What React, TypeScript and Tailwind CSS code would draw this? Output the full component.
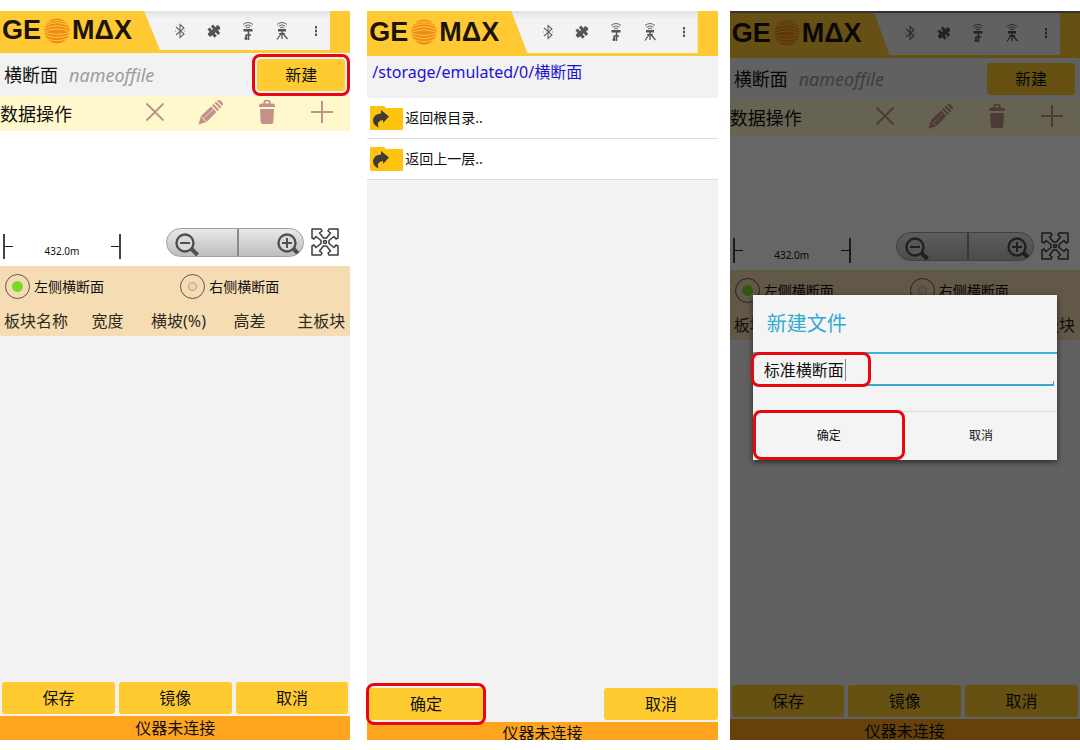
import React, { useId } from 'react';

const FRAME = 'pointer-events-none absolute rounded-lg border-[3px] border-[#e8060f]';

const Globe = () => (
  <svg className="h-[26px] w-[26px] shrink-0" viewBox="0 0 26 26" aria-hidden="true">
    <circle cx="13" cy="13" r="12.5" fill="#f08a1a" />
    <g fill="none" stroke="#ffc933" strokeWidth="1">
      <path d="M4 5Q13 0 22 5" />
      <path d="M2 7.500Q13 2 24 7.500" />
      <path d="M1 10.500Q13 5 25 10.500" />
      <path d="M0 13.500Q13 8.500 26 13.500" />
      <path d="M0 14.500Q13 18 26 14.500" />
      <path d="M1 17Q13 22 25 17" />
      <path d="M3 20.500Q13 25 23 20.500" />
    </g>
  </svg>
);

const BluetoothIcon = () => (
  <svg className="h-5 w-5" viewBox="0 0 20 20" fill="none" stroke="#666" strokeWidth="1.1">
    <path d="M6 6L14 13L10 16.500V3.500L14 7L6 14" />
    <path d="M5 10h.8M14.500 10h.8" />
  </svg>
);

const SatelliteIcon = () => (
  <svg className="h-5 w-5" viewBox="0 0 20 20" fill="#555">
    <g transform="rotate(-40 10 10)">
      <rect x="3" y="8" width="14" height="4" rx="1" />
      <rect x="6" y="4.500" width="3" height="11" />
      <rect x="10.500" y="4.500" width="3" height="11" />
      <path d="M15 7Q18.500 10 15 13Z" />
    </g>
  </svg>
);

const RoverIcon = () => (
  <svg className="h-5 w-5" viewBox="0 0 20 20" fill="none" stroke="#555">
    <path d="M5 3.500Q10-.5 15 3.500M6.500 5.200Q10 2.500 13.500 5.200M8 6.800Q10 5.500 12 6.800" strokeWidth=".9" />
    <rect x="5.500" y="8" width="9" height="2.500" fill="#555" stroke="none" />
    <path d="M10.500 10V19M8 14h5M8 13.500V18" strokeWidth="1.600" />
    <circle cx="8" cy="17.500" r="1.500" fill="#555" stroke="none" />
  </svg>
);

const BaseIcon = () => (
  <svg className="h-5 w-5" viewBox="0 0 20 20" fill="none" stroke="#555">
    <path d="M5 3.500Q10-.5 15 3.500M6.500 5.200Q10 2.500 13.500 5.200M8 6.800Q10 5.500 12 6.800" strokeWidth=".9" />
    <rect x="6" y="8" width="8" height="2.500" fill="#555" stroke="none" />
    <path d="M10 10V18M9.500 12L5 18.500M10.500 12L15.500 18" strokeWidth="1.300" />
    <path d="M7 12.500h6" />
  </svg>
);

const MoreIcon = () => (
  <svg className="h-5 w-5" viewBox="0 0 20 20" fill="#555">
    <path d="M9 5h2v2.500H9zM9 8.700h2v2.500H9zM9 12.400h2v2.500H9z" />
  </svg>
);

const headerIcons = [
  { label: '蓝牙', Icon: BluetoothIcon },
  { label: '卫星', Icon: SatelliteIcon },
  { label: '移动站', Icon: RoverIcon },
  { label: '基准站', Icon: BaseIcon },
  { label: '更多', Icon: MoreIcon },
];

const Header: React.FC<{ className: string }> = ({ className }) => (
  <header className={`flex shrink-0 bg-[#ffc933] pr-5 pb-[3px] ${className}`}>
    <div className="flex w-36 shrink-0 items-center pl-[2px] font-['Liberation_Sans',sans-serif] text-[27px] leading-none font-bold text-[#1c1408]">
      <span className="w-[42px]">GE</span>
      <Globe />
      <span className="pl-[2px]">MΔX</span>
    </div>
    <nav className="flex flex-1 items-center justify-end gap-[14px] bg-linear-to-b from-[#e2e2e2] to-[#f3f3f3] to-20% pr-1 [clip-path:polygon(0_0,100%_0,100%_100%,16px_100%)]">
      {headerIcons.map(({ label, Icon }) => (
        <button key={label} type="button" aria-label={label}>
          <Icon />
        </button>
      ))}
    </nav>
  </header>
);

const YellowButton: React.FC<{ children: React.ReactNode; className?: string }> = ({
  children,
  className = '',
}) => (
  <button type="button" className={`h-8 rounded-[3px] bg-[#ffcb31] text-base leading-none ${className}`}>
    {children}
  </button>
);

const StatusBar: React.FC<{ className: string }> = ({ className }) => (
  <footer className={`shrink-0 overflow-hidden bg-[#ffa41f] text-center text-base ${className}`}>
    仪器未连接
  </footer>
);

// Row of edit tools: clear, edit, delete, add
const DataTools = () => (
  <div className="flex h-[35px] shrink-0 items-center justify-between bg-[#fff8cc] pr-4">
    <span className="text-lg leading-none">数据操作</span>
    <div className="flex items-center gap-[31px] pb-1 text-[#c4918a]">
      <button type="button" aria-label="清除">
        <svg className="h-6 w-6" viewBox="0 0 24 24" fill="none" stroke="currentColor" strokeWidth="2">
          <path d="M3.500 3.500L20.500 20.500M20.500 3.500L3.500 20.500" />
        </svg>
      </button>
      <button type="button" aria-label="编辑">
        <svg className="h-[26px] w-[26px]" viewBox="0 0 26 26" fill="currentColor">
          <path d="M.5 25.500L3 17L13 7.500L18.500 13L8.500 23Z" />
          <path d="M14 6.500L15.500 5L21 10.500L19.500 12ZM16.500 4L18 2.500L23.500 8L22 9.500ZM19 1.700Q21 0 23 2L24.200 3.200Q26 5 24.300 7Z" />
          <path d="M3.500 18L8 22.500" stroke="#fff8cc" strokeWidth="1" />
          <path d="M6 19L15 10.500" stroke="#fff8cc" strokeWidth=".7" />
        </svg>
      </button>
      <button type="button" aria-label="删除">
        <svg className="h-[26px] w-6" viewBox="0 0 24 26" fill="currentColor">
          <path d="M4 7Q4 4.500 6 4.500H8.500V2.500Q8.500 1 10 1H14Q15.500 1 15.500 2.500V4.500H18Q20 4.500 20 7V8H4ZM10.200 4.500H13.800V2.500H10.200Z" fillRule="evenodd" />
          <path d="M5 10H19L18.300 23Q18.200 25 16.500 25H7.500Q5.800 25 5.700 23Z" />
        </svg>
      </button>
      <button type="button" aria-label="添加">
        <svg className="h-6 w-6" viewBox="0 0 24 24" fill="none" stroke="currentColor" strokeWidth="2">
          <path d="M12 1V23M1 12H23" />
        </svg>
      </button>
    </div>
  </div>
);

const Magnifier: React.FC<{ plus?: boolean }> = ({ plus = false }) => (
  <svg className="h-[28px] w-[28px]" viewBox="0 0 28 28" fill="none" stroke="#505050">
    <path d="M17.500 19L24.500 26" strokeWidth="4" />
    <circle cx="12" cy="14" r="8.500" fill="#d9d9d9" strokeWidth="2.400" />
    <path d={plus ? 'M7 14h10M12 9v10' : 'M7 14h10'} strokeWidth="2" />
  </svg>
);

const SectionView = () => (
  <div className="flex h-[135px] shrink-0 items-end justify-between bg-white pr-[11px] pb-[7px] pl-[3px]">
    <div className="flex h-[25px] w-[118px] items-center justify-between border-x-2 border-[#444]">
      <span className="h-px w-2 bg-[#222]" />
      <span className="pt-2 text-[10px] leading-none">432.0m</span>
      <span className="h-px w-2 bg-[#222]" />
    </div>
    <div className="flex items-end gap-[7px]">
      <div className="mb-[2px] flex h-[29px] w-[138px] overflow-hidden rounded-full border border-[#a0a0a0] bg-linear-to-b from-[#e9e9e9] to-[#bdbdbd]">
        <button type="button" aria-label="缩小" className="flex flex-1 items-center border-r-2 border-[#8a8a8a] pl-[6px]">
          <Magnifier />
        </button>
        <button type="button" aria-label="放大" className="flex flex-1 items-center justify-end">
          <Magnifier plus />
        </button>
      </div>
      <button type="button" aria-label="全图" className="pb-[3px]">
        <svg className="h-7 w-7" viewBox="0 0 28 28" fill="#fafafa" stroke="#3c3c3c" strokeWidth="1.500" strokeLinejoin="round">
          <path d="M1 1H10L11 3L8.500 5L12.500 10H15.500L19.500 5L17 3L18 1H27V10L25 11L23 8.500L18 12.500V15.500L23 19.500L25 17L27 18V27H18L17 25L19.500 23L15.500 18H12.500L8.500 23L11 25L10 27H1V18L3 17L5 19.500L10 15.500V12.500L5 8.500L3 11L1 10Z" />
          <circle cx="14" cy="14" r="1.500" />
        </svg>
      </button>
    </div>
  </div>
);

const RADIO =
  'm-0 h-[25px] w-[25px] shrink-0 appearance-none rounded-full border border-[#5d564a] bg-[radial-gradient(circle,#e6d5b8_0_3px,#b3a78f_4px,transparent_5px)] checked:bg-[radial-gradient(circle,#74dc1c_0_4px,#8ccf4a_5px,transparent_6px)]';

const columns = [
  { name: '板块名称', className: 'w-[72px]' },
  { name: '宽度', className: 'w-[71px]' },
  { name: '横坡(%)', className: 'w-[71px]' },
  { name: '高差', className: 'w-[71px]' },
  { name: '主板块', className: 'pr-[5px] text-right' },
];

const SideTable = () => {
  const group = useId();

  return (
    <div className="h-[70px] shrink-0 bg-[#f6dcb3]">
      <div className="grid h-[41px] grid-cols-2 items-center">
        <label className="flex items-center gap-1 pl-[5px] text-sm leading-none">
          <input type="radio" name={group} defaultChecked className={RADIO} />
          左侧横断面
        </label>
        <label className="flex items-center gap-1 pl-[5px] text-sm leading-none">
          <input type="radio" name={group} className={RADIO} />
          右侧横断面
        </label>
      </div>
      <table className="w-full table-fixed border-collapse text-base leading-[29px] text-[#2e2a22]">
        <thead>
          <tr>
            {columns.map((col) => (
              <th key={col.name} scope="col" className={`p-0 font-normal whitespace-nowrap ${col.className}`}>
                {col.name}
              </th>
            ))}
          </tr>
        </thead>
      </table>
    </div>
  );
};

interface SectionScreenProps {
  headerClass: string;
  fileRowClass: string;
  statusClass: string;
  highlightNew?: boolean;
}

const SectionScreen: React.FC<SectionScreenProps> = ({
  headerClass,
  fileRowClass,
  statusClass,
  highlightNew = false,
}) => (
  <>
    <Header className={headerClass} />
    <div className={`flex shrink-0 items-center pr-[5px] pl-1 ${fileRowClass}`}>
      <h1 className="text-lg leading-none">横断面</h1>
      <span className="pl-[11px] text-lg leading-none text-[#9c9c9c] italic">nameoffile</span>
      <div className="relative ml-auto">
        <YellowButton className="w-[88px]">新建</YellowButton>
        {highlightNew && <span className={`${FRAME} -inset-[5px]`} />}
      </div>
    </div>
    <DataTools />
    <SectionView />
    <SideTable />
    <div className="flex-1" />
    <div className="grid shrink-0 grid-cols-3 gap-1 px-[2px] pb-[2px]">
      <YellowButton>保存</YellowButton>
      <YellowButton>镜像</YellowButton>
      <YellowButton>取消</YellowButton>
    </div>
    <StatusBar className={statusClass} />
  </>
);

const FolderIcon = () => (
  <svg className="h-[26px] w-[33px] shrink-0" viewBox="0 0 33 26" aria-hidden="true">
    <path d="M0 2Q0 1 1 1H14L16 3H32Q33 3 33 4V24Q33 25 32 25H1Q0 25 0 24Z" fill="#ffc20e" />
    <path d="M11 5L19 11.500L13 18V15Q6 15.500 8.500 22.500Q2.500 20 3 14.500Q4.500 8.500 11 8.500Z" fill="#3f3a33" />
  </svg>
);

const FileBrowser = () => (
  <>
    <Header className="h-[45px]" />
    <p className="h-[42px] shrink-0 pt-1 pl-[5px] text-base leading-6 text-[#1d12d2]">
      /storage/emulated/0/横断面
    </p>
    <ul className="shrink-0">
      {['返回根目录..', '返回上一层..'].map((name) => (
        <li key={name} className="border-b border-[#dcdcdc] bg-white">
          <button type="button" className="flex h-10 w-full items-center gap-[2px] pl-[3px] text-sm leading-none">
            <FolderIcon />
            {name}
          </button>
        </li>
      ))}
    </ul>
    <div className="flex-1" />
    <div className="grid shrink-0 grid-cols-3 gap-1 pb-[2px] pl-[2px]">
      <div className="relative flex">
        <YellowButton className="flex-1">确定</YellowButton>
        <span className={`${FRAME} -inset-x-[3px] -inset-y-[5px]`} />
      </div>
      <YellowButton className="col-start-3">取消</YellowButton>
    </div>
    <StatusBar className="h-[18px] leading-[22px]" />
  </>
);

const NewFileDialog = () => (
  <div
    role="dialog"
    aria-labelledby="new-file-title"
    className="absolute inset-x-[23px] top-[284px] bg-[#f4f4f4] shadow-[0_2px_6px_rgba(0,0,0,0.6)]"
  >
    <h2 id="new-file-title" className="h-[57px] pl-[14px] text-xl leading-[57px] text-[#33a9d3]">
      新建文件
    </h2>
    <div className="border-t-2 border-[#3db4d8] pr-[3px] pb-[25px] pl-1">
      <div className="relative flex h-8 items-center border-b-2 border-[#3aa9cc] pt-[2px] pl-[7px]">
        <input
          type="text"
          aria-label="文件名"
          defaultValue="标准横断面"
          className="w-[81px] bg-transparent p-0 text-base leading-6 outline-none"
        />
        <span className="h-[22px] w-px bg-[#888]" />
        <span className="absolute right-0 bottom-0 h-[3px] w-px bg-[#3aa9cc]" />
        <span className={`${FRAME} -top-[2px] -bottom-[3px] -left-[6px] w-[120px]`} />
      </div>
    </div>
    <div className="grid grid-cols-2 border-t border-[#dedede]">
      <div className="relative flex">
        <button type="button" className="h-12 flex-1 text-xs">
          确定
        </button>
        <span className={`${FRAME} inset-x-0 -top-[2px] bottom-0`} />
      </div>
      <button type="button" className="h-12 text-xs">
        取消
      </button>
    </div>
  </div>
);

const SCREEN = 'relative flex min-w-0 flex-1 flex-col bg-[#f2f2f2]';

const App: React.FC = () => {
  return (
    <main className="flex min-h-screen bg-white pt-[11px] pb-[10px] font-['Noto_Sans','Noto_Sans_CJK_SC',sans-serif] text-[#111]">
      {/* Cross section editor */}
      <section className={SCREEN}>
        <SectionScreen headerClass="h-[42px]" fileRowClass="h-[43px]" statusClass="h-6 leading-6" highlightNew />
      </section>

      {/* Folder picker */}
      <section className={`${SCREEN} ml-[17px]`}>
        <FileBrowser />
      </section>

      {/* Editor dimmed behind the new file dialog */}
      <section className={`${SCREEN} ml-3`}>
        <SectionScreen headerClass="h-[47px]" fileRowClass="h-[42px]" statusClass="h-[21px] leading-6" />
        <div className="absolute inset-0 border-t-2 border-[#333] bg-black/60" />
        <NewFileDialog />
      </section>
    </main>
  );
};

export default App;
